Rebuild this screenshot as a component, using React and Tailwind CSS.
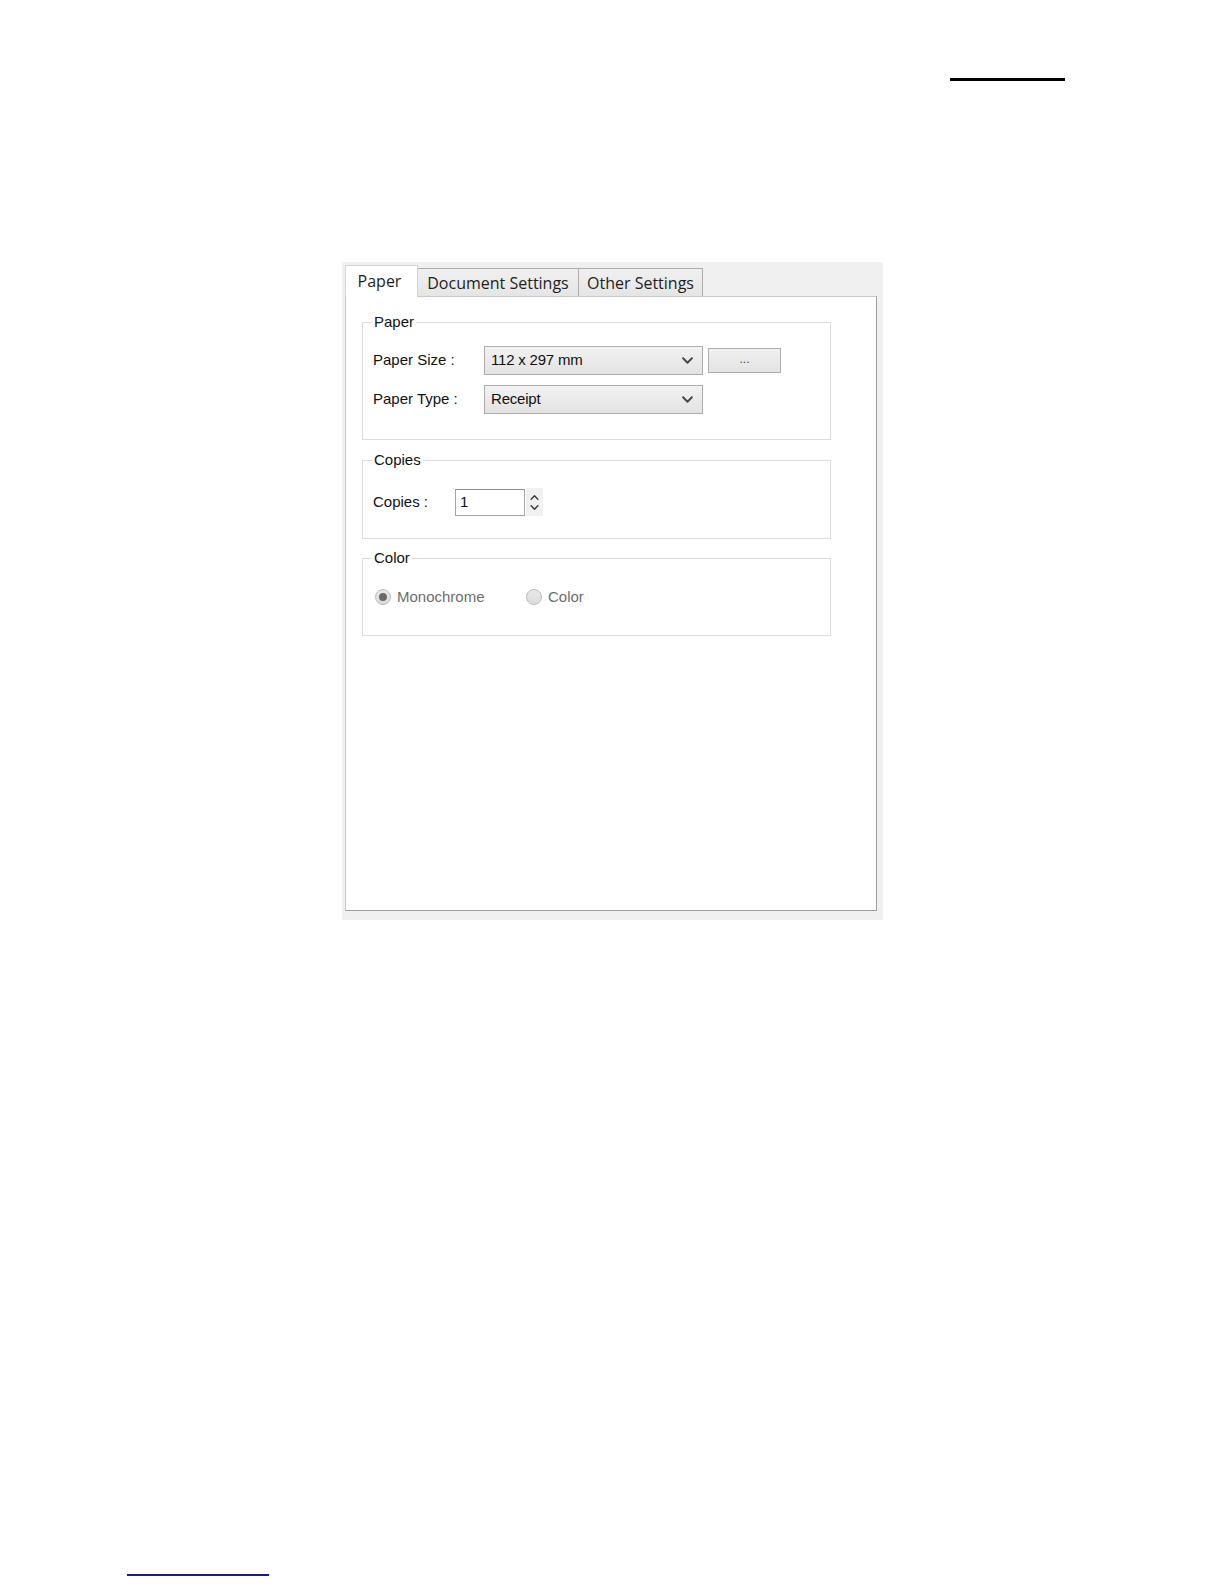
import React from "react";

const Chevron = ({ className = "" }) => (
  <svg viewBox="0 0 10 6" className={className} fill="none" stroke="currentColor" strokeWidth="1.8">
    <path d="M1 1l4 4 4-4" strokeLinecap="round" strokeLinejoin="round" />
  </svg>
);

function Select({ value }) {
  return (
    <div className="w-[219px] h-[29px] flex items-center justify-between border border-[#acacac] bg-linear-to-b from-[#f2f2f2] to-[#e3e3e3] pl-[6px] pr-[9px] text-[15px] tracking-[-0.2px] text-[#111]">
      <span>{value}</span>
      <Chevron className="w-[11px] h-[7px] text-[#4a4a4a]" />
    </div>
  );
}

// groupbox: legend sits on the top border, content padded inside
function Group({ title, className = "", children }) {
  return (
    <fieldset className={`w-[469px] border border-[#dcdcdc] ${className}`}>
      <legend className="ml-[9px] px-[2px] text-[15px] leading-[18px] text-[#111]">{title}</legend>
      {children}
    </fieldset>
  );
}

function Radio({ checked, label }) {
  return (
    <div className="flex items-center gap-[6px]">
      <span className="w-[16px] h-[16px] rounded-full border border-[#bcbcbc] bg-linear-to-b from-[#e9e9e9] to-[#dcdcdc] flex items-center justify-center">
        {checked && <span className="w-[8px] h-[8px] rounded-full bg-[#6a6a6a]" />}
      </span>
      <span className="text-[15px] text-[#6d6d6d]">{label}</span>
    </div>
  );
}

export default function App() {
  return (
    <div className="w-[1224px] h-[1584px] bg-white flex flex-col font-['Liberation_Sans',Arial,sans-serif]">
      <div className="ml-[950px] mt-[78px] w-[115px] h-[3px] bg-black" />

      {/* Printer preferences dialog */}
      <div className="ml-[342px] mt-[181px] w-[541px] h-[658px] bg-[#f0f0f0] pl-[3px] pr-[6px] pt-[3px] pb-[9px] flex flex-col">
        <div className="h-[31px] flex items-end font-['Open_Sans',sans-serif] text-[16px] text-[#1e1e1e]">
          <div className="relative z-10 -mb-px w-[73px] h-[32px] bg-white border border-b-0 border-[#d4d4d4] flex items-center justify-center pr-[4px] pb-[2px]">
            Paper
          </div>
          <div className="w-[161px] h-[28px] border border-b-0 border-l-0 border-[#adadad] bg-linear-to-b from-[#f0f0f0] to-[#e5e5e5] flex items-center justify-center">
            Document Settings
          </div>
          <div className="w-[124px] h-[28px] border border-b-0 border-l-0 border-[#adadad] bg-linear-to-b from-[#f0f0f0] to-[#e5e5e5] flex items-center justify-center">
            Other Settings
          </div>
        </div>

        <div className="flex-1 bg-white border border-[#c8c8c8] border-r-[#9c9c9c] border-b-[#9c9c9c] pl-[16px] pt-[16px] flex flex-col">
          <Group title="Paper">
            <div className="pl-[10px] pt-[15px] pb-[25px] flex flex-col gap-[10px] text-[15px] text-[#111]">
              <div className="flex items-center">
                <span className="w-[111px]">Paper Size :</span>
                <Select value="112 x 297 mm" />
                <div className="ml-[5px] w-[73px] h-[25px] border border-[#adadad] bg-linear-to-b from-[#f0f0f0] to-[#e3e3e3] flex items-center justify-center text-[12px] text-[#444] pb-[4px]">
                  ...
                </div>
              </div>
              <div className="flex items-center">
                <span className="w-[111px]">Paper Type :</span>
                <Select value="Receipt" />
              </div>
            </div>
          </Group>

          <Group title="Copies" className="mt-[11px]">
            <div className="pl-[10px] pt-[19px] pb-[22px] flex items-center text-[15px] text-[#111]">
              <span className="w-[82px]">Copies :</span>
              <div className="w-[70px] h-[27px] border border-[#a5a5a5] border-t-[#8e8e8e] pl-[4px] flex items-center">1</div>
              <div className="ml-px w-[17px] h-[28px] bg-[#f0f0f0] flex flex-col items-center justify-center gap-[5px] text-[#3c3c3c]">
                <Chevron className="w-[9px] h-[5px] rotate-180" />
                <Chevron className="w-[9px] h-[5px]" />
              </div>
            </div>
          </Group>

          <Group title="Color" className="mt-[10px]">
            <div className="pl-[12px] pt-[19px] pb-[26px] flex items-center">
              <div className="w-[151px]">
                <Radio checked label="Monochrome" />
              </div>
              <Radio label="Color" />
            </div>
          </Group>
        </div>
      </div>

      <div className="ml-[127px] mt-[654px] w-[142px] h-[2px] bg-[#1a1a8a]" />
    </div>
  );
}
